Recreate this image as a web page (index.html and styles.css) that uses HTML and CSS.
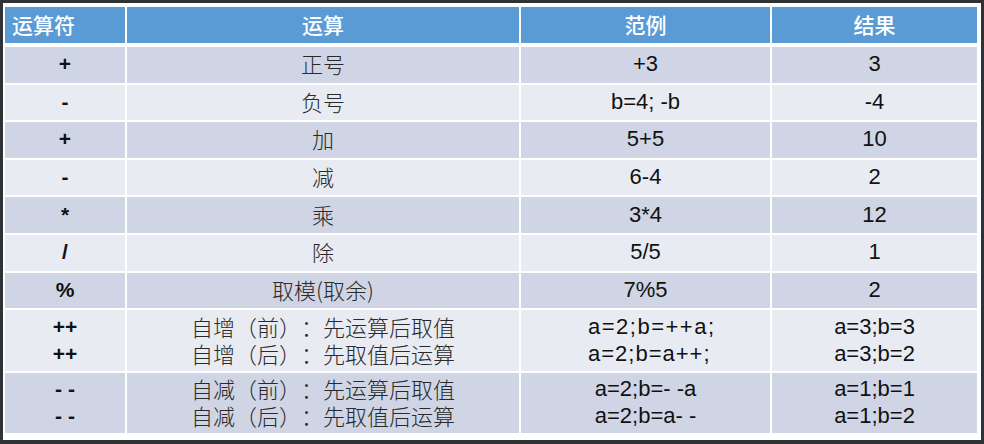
FILE: index.html
```html
<!DOCTYPE html>
<html lang="zh">
<head>
<meta charset="utf-8">
<link rel="stylesheet" href="styles.css">
</head>
<body>
<div class="frame">
  <div class="sheet">
    <div class="head">
      <div class="hc first">运算符</div>
      <div class="hc">运算</div>
      <div class="hc">范例</div>
      <div class="hc">结果</div>
    </div>
    <div class="body">
      <div class="c op b1">+</div><div class="c cj b1">正号</div><div class="c la b1">+3</div><div class="c la b1">3</div>
      <div class="c op b2">-</div><div class="c cj b2">负号</div><div class="c la b2">b=4; -b</div><div class="c la b2">-4</div>
      <div class="c op b1">+</div><div class="c cj b1">加</div><div class="c la b1">5+5</div><div class="c la b1">10</div>
      <div class="c op b2">-</div><div class="c cj b2">减</div><div class="c la b2">6-4</div><div class="c la b2">2</div>
      <div class="c op b1">*</div><div class="c cj b1">乘</div><div class="c la b1">3*4</div><div class="c la b1">12</div>
      <div class="c op b2">/</div><div class="c cj b2">除</div><div class="c la b2">5/5</div><div class="c la b2">1</div>
      <div class="c op b1">%</div><div class="c cj b1">取模(取余)</div><div class="c la b1">7%5</div><div class="c la b1">2</div>
      <div class="c op b2 two"><span>++</span><span>++</span></div>
      <div class="c cj b2 two"><span>自增（前）：先运算后取值</span><span>自增（后）：先取值后运算</span></div>
      <div class="c la b2 two inc"><span class="w1">a=2;b=++a;</span><span class="w2">a=2;b=a++;</span></div>
      <div class="c la b2 two"><span>a=3;b=3</span><span>a=3;b=2</span></div>
      <div class="c op b1 two"><span>- -</span><span>- -</span></div>
      <div class="c cj b1 two"><span>自减（前）：先运算后取值</span><span>自减（后）：先取值后运算</span></div>
      <div class="c la b1 two"><span>a=2;b=- -a</span><span>a=2;b=a- -</span></div>
      <div class="c la b1 two"><span>a=1;b=1</span><span>a=1;b=2</span></div>
    </div>
  </div>
</div>
</body>
</html>
```
FILE: styles.css
```css
html, body {
  margin: 0;
  padding: 0;
  background: #2f3237;
}
.frame {
  width: 984px;
  height: 444px;
  padding: 3px 3px 4px 3px;
  box-sizing: border-box;
}
.sheet {
  width: 978px;
  height: 437px;
  background: #ffffff;
  box-sizing: border-box;
  padding: 4px 4px 0 2px;
  display: flex;
  flex-direction: column;
  gap: 4px;
}
.head, .body {
  display: grid;
  grid-template-columns: 120px 392px 249px 205px;
  column-gap: 2px;
}
.head {
  height: 36px;
}
.body {
  grid-template-rows: repeat(7, 35.6px) 61px 60px;
  row-gap: 2px;
}
.hc {
  background: #5b9bd5;
  color: #ffffff;
  font-family: "Noto Sans CJK SC", "Noto Sans", sans-serif;
  font-size: 21px;
  font-weight: 500;
  display: flex;
  align-items: center;
  justify-content: center;
  line-height: 1;
  padding-bottom: 2px;
}
.hc.first {
  justify-content: flex-start;
  padding-left: 7px;
}
.c {
  display: flex;
  flex-direction: column;
  align-items: center;
  justify-content: center;
  color: #111111;
  font-family: "Liberation Sans", Arial, sans-serif;
  font-size: 22px;
  line-height: 27px;
  padding-bottom: 2px;
  box-sizing: border-box;
}
.b1 { background: #cfd5e4; }
.b2 { background: #e8ebf2; }
.op {
  font-weight: bold;
  font-size: 21px;
}
.cj {
  font-family: "Noto Sans CJK SC", "Noto Sans", sans-serif;
  font-weight: 300;
  color: #2a2a2a;
  font-size: 22px;
  text-spacing-trim: space-all;
}
.two span {
  display: block;
  white-space: pre;
}
.inc {
  align-items: flex-start;
  padding-left: 67px;
}
.w1 {
  letter-spacing: 1.5px;
}
.w2 {
  letter-spacing: 1px;
}
```
